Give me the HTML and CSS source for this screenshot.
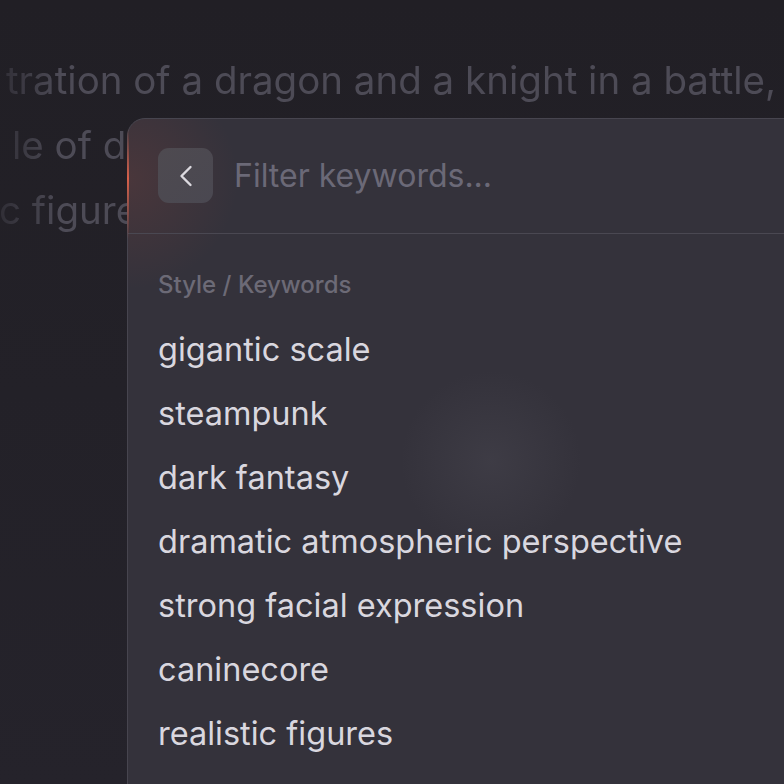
FILE: index.html
```html
<!DOCTYPE html>
<html>
<head>
<meta charset="utf-8">
<link rel="stylesheet" href="styles.css">
</head>
<body>
<div class="page">
  <div class="prompt">
    <div class="prompt-line l1">tration of a dragon and a knight in a battle,</div>
    <div class="prompt-line l2">le of dark fantasy, dramatic</div>
    <div class="prompt-line l3">c figures</div>
  </div>
  <div class="panel">
    <div class="glow-edge"></div>
    <div class="panel-header">
      <button class="back-btn" aria-label="Back">
        <svg width="24" height="24" viewBox="0 0 24 24" fill="none"><path d="M16.5 3 L7.5 12 L16.5 21" stroke="#dcdae0" stroke-width="2.4" stroke-linecap="round" stroke-linejoin="round"/></svg>
      </button>
      <div class="filter-input">Filter keywords...</div>
    </div>
    <div class="panel-body">
      <div class="section-label">Style / Keywords</div>
      <ul class="keyword-list">
        <li>gigantic scale</li>
        <li>steampunk</li>
        <li>dark fantasy</li>
        <li>dramatic atmospheric perspective</li>
        <li>strong facial expression</li>
        <li>caninecore</li>
        <li>realistic figures</li>
      </ul>
    </div>
  </div>
</div>
</body>
</html>
```

FILE: styles.css
```css
* { box-sizing: border-box; }
html, body {
  margin: 0;
  padding: 0;
  width: 784px;
  height: 784px;
  overflow: hidden;
  background: #232128;
  font-family: Inter, "Noto Sans", sans-serif;
}
.page {
  position: relative;
  width: 784px;
  height: 784px;
  background: linear-gradient(180deg, #211f25 0%, #25232b 100%);
  overflow: hidden;
}
.prompt {
  padding-top: 48px;
  -webkit-mask-image: linear-gradient(90deg, rgba(0,0,0,0.35) 0px, #000 60px);
  mask-image: linear-gradient(90deg, rgba(0,0,0,0.35) 0px, #000 60px);
}
.prompt-line {
  white-space: nowrap;
  font-size: 38.5px;
  line-height: 65px;
  color: #4d4b56;
}
.l1 { margin-left: 6px; }
.l2 { margin-left: 12px; }
.l3 { margin-left: -1px; }
.panel {
  position: absolute;
  left: 127px;
  top: 118px;
  width: 720px;
  height: 720px;
  border: 1px solid #47454f;
  border-radius: 18px;
  background:
    radial-gradient(circle 90px at 363px 342px, rgba(80,78,88,0.35), rgba(80,78,88,0) 100%),
    radial-gradient(ellipse 110px 110px at 0px 60px, rgba(150,70,60,0.22), rgba(150,70,60,0) 100%),
    #34323b;
}
.glow-edge {
  position: absolute;
  left: -1px;
  top: 10px;
  width: 2px;
  height: 110px;
  background: linear-gradient(180deg, rgba(230,100,75,0) 0%, rgba(230,100,75,0.9) 45%, rgba(230,100,75,0) 100%);
}
.panel-header {
  display: flex;
  align-items: center;
  gap: 21px;
  padding: 29px 30px 30px 30px;
  border-bottom: 1px solid #4a4852;
}
.back-btn {
  flex: none;
  width: 55px;
  height: 55px;
  border: none;
  border-radius: 11px;
  background: linear-gradient(135deg, #4e4a50 0%, #4a4851 100%);
  display: flex;
  align-items: center;
  justify-content: center;
  padding: 0;
}
.filter-input {
  font-size: 32px;
  line-height: 40px;
  color: #6b6977;
  white-space: nowrap;
}
.panel-body {
  padding: 35px 30px 0 30px;
}
.section-label {
  font-size: 24px;
  font-weight: 500;
  line-height: 32px;
  color: #6c6a76;
}
.keyword-list {
  list-style: none;
  margin: 17px 0 0 0;
  padding: 0;
}
.keyword-list li {
  font-size: 32.5px;
  line-height: 64px;
  color: #d9d7df;
  white-space: nowrap;
}
```
